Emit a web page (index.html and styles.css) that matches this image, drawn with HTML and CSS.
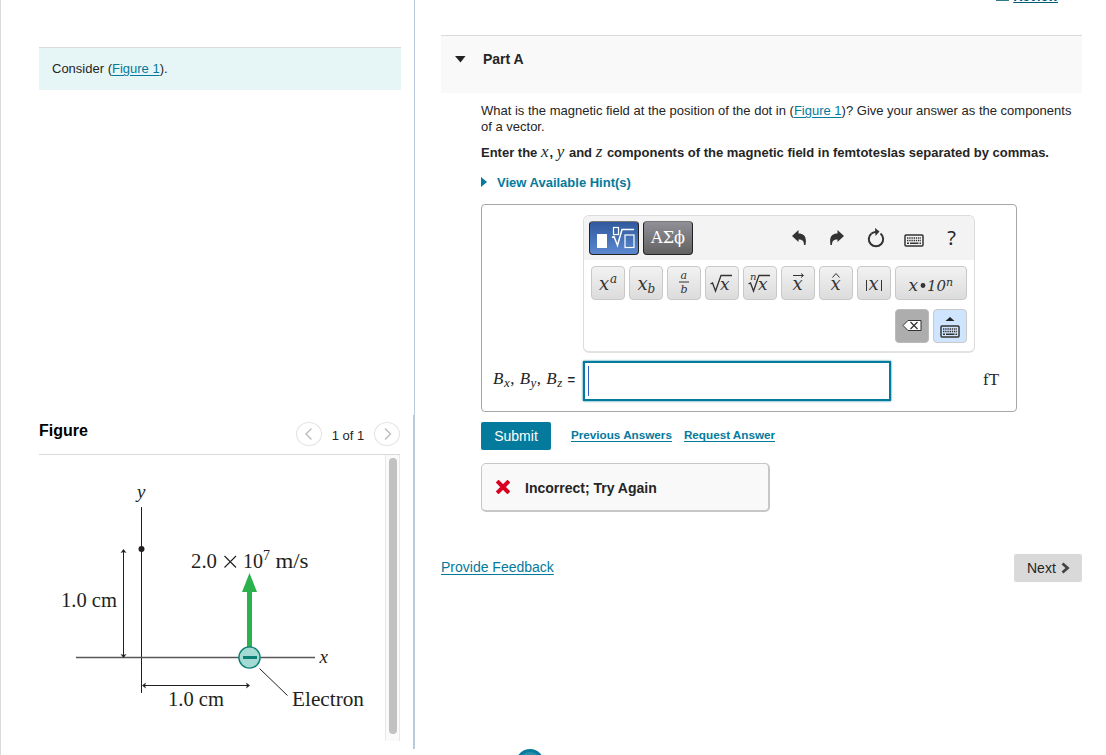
FILE: index.html
```html
<!doctype html>
<html lang="en">
<head>
  <meta charset="utf-8">
  <title>Magnetic Field</title>
  <link rel="stylesheet" href="styles.css">
</head>
<body>
  <svg class="defs" width="0" height="0">
    <symbol id="keyboard" viewBox="0 0 20 13">
      <rect x="1" y="1" width="18" height="11" rx="1" fill="none" stroke="#333" stroke-width="1.5"/>
      <path d="M3 4h14M3 6.5h14" stroke="#333" stroke-width="1.6" stroke-dasharray="1.4 .8"/>
      <path d="M3 9.2h2M6 9.2h8.500M15.500 9.200h1.500" stroke="#333" stroke-width="1.500"/>
    </symbol>
  </svg>
  <div class="page">
    <div class="left">
      <div class="intro-pane">
        <div class="intro">Consider (<a href="#">Figure 1</a>).</div>
      </div>
      <div class="figure-pane">
        <div class="figure-head">
          <h2>Figure</h2>
          <div class="pager">
            <button class="round"><svg width="24" height="22"><path d="M14.500 5.500L9 11l5.500 5.500" fill="none" stroke="#bbb" stroke-width="1.400"/></svg></button>
            <span>1 of 1</span>
            <button class="round"><svg width="24" height="22"><path d="M10 5.500l5.500 5.500-5.500 5.500" fill="none" stroke="#bbb" stroke-width="1.400"/></svg></button>
          </div>
        </div>
        <div class="figure-body">
          <svg class="diagram" width="346" height="286" viewBox="39 455 346 286">
            <g stroke="#231f20" stroke-width="1" fill="none">
              <path d="M141.500 507v186M123.500 551v104M144 685.500h104"/>
              <path d="M76 657.500h239" stroke="#58585a" stroke-width="1.300"/>
              <path d="M259.500 668.500l28 27"/>
            </g>
            <g fill="#231f20">
              <path d="M123.500 549l3 4-3-1-3 1zM123.500 658l3-4-3 1-3-1zM142 685.500l4-3-1 3 1 3zM250 685.500l-4-3 1 3-1 3z"/>
              <circle cx="141.500" cy="549" r="3"/>
            </g>
            <path d="M247 648v-56h-5l7.500-19 7.500 19H252v56z" fill="#2bb24c"/>
            <circle cx="249.500" cy="657.500" r="10.600" fill="#a3dad3" stroke="#0b8075" stroke-width="1.400"/>
            <path d="M243 657.500h14" stroke="#0b8075" stroke-width="3"/>
            <path d="M224.500 556l11.500 11.500M236 556l-11.500 11.500" stroke="#231f20" stroke-width="1.100"/>
            <g class="label">
              <text x="137" y="498" class="it">y</text>
              <text x="319.500" y="663" class="it">x</text>
              <text x="191" y="568" textLength="26" lengthAdjust="spacingAndGlyphs">2.0</text>
              <text x="243" y="568" textLength="20" lengthAdjust="spacingAndGlyphs">10</text>
              <text x="263" y="560" font-size="13">7</text>
              <text x="275.500" y="568" textLength="33" lengthAdjust="spacingAndGlyphs">m/s</text>
              <text x="61" y="607" textLength="56" lengthAdjust="spacingAndGlyphs">1.0 cm</text>
              <text x="168" y="706" textLength="56" lengthAdjust="spacingAndGlyphs">1.0 cm</text>
              <text x="292" y="706" textLength="72" lengthAdjust="spacingAndGlyphs">Electron</text>
            </g>
          </svg>
          <div class="scroll"><div class="thumb"></div></div>
        </div>
      </div>
    </div>

    <div class="right">
      <div class="review"><i></i><a href="#">Review</a></div>
      <div class="part-head"><svg width="11" height="7"><path d="M0 0h10.500L5.500 6.500z" fill="#222"/></svg><h3>Part A</h3></div>
      <div class="part">
        <p class="question">What is the magnetic field at the position of the dot in (<a href="#">Figure 1</a>)? Give your answer as the components<br>of a vector.</p>
        <p class="enter">Enter the <i class="m">x</i>, <i class="m">y</i> and <i class="m">z</i> components of the magnetic field in femtoteslas separated by commas.</p>
        <a class="hints" href="#"><svg width="6" height="10"><path d="M0 0l6 5-6 5z" fill="#047a9c"/></svg><span>View Available Hint(s)</span></a>

        <div class="answer">
          <div class="toolbar">
            <div class="tools">
              <button class="tab active"><svg width="48" height="32">
                <rect x="7" y="12" width="10" height="14" fill="#fff"/>
                <g fill="none" stroke="#fff" stroke-width="1.200"><rect x="23.500" y="5.500" width="5" height="7"/><path d="M22 15.500l2-1 3.500 9L32 7.500h12" stroke-width="1.500"/><rect x="35" y="13" width="9" height="12.500"/></g>
              </svg></button>
              <button class="tab"><svg width="48" height="32"><text x="7" y="21" textLength="34" lengthAdjust="spacingAndGlyphs" class="greek">ΑΣϕ</text></svg></button>
              <div class="actions">
                <svg width="14" height="16"><path d="M0 6L6.500 0v3.500c5.500 0 8.500 3 7 11.500H12c0-4-1.500-5.500-5.500-5.500V12z" fill="#333"/></svg>
                <svg width="14" height="16"><path d="M14 6L7.500 0v3.500c-5.500 0-8.500 3-7 11.500H2c0-4 1.500-5.500 5.500-5.500V12z" fill="#333"/></svg>
                <svg width="18" height="20"><path d="M4.500 5.500a7.200 7.200 0 1 0 9 0" fill="none" stroke="#333" stroke-width="2"/><path d="M4.500 5.500Q6.500 4 9 4" fill="none" stroke="#333" stroke-width="2"/><path d="M8 0l4.500 3.500L8.500 8z" fill="#333"/></svg>
                <svg class="kbd" width="20" height="13"><use href="#keyboard"/></svg>
                <span>?</span>
              </div>
            </div>
            <div class="keys">
              <button class="key"><svg><text x="7" y="23" font-size="18">x</text><text x="18" y="16" font-size="12">a</text></svg></button>
              <button class="key"><svg><text x="7.500" y="23" font-size="18">x</text><text x="17.500" y="26" font-size="12">b</text></svg></button>
              <button class="key"><svg><text x="12.500" y="12" font-size="11">a</text><path d="M11 15h10" stroke-width="1"/><text x="12.500" y="26" font-size="11">b</text></svg></button>
              <button class="key"><svg><path d="M4.500 17l2-1 3 8L15 8.500h11"/><text x="14" y="23" font-size="17">x</text></svg></button>
              <button class="key"><svg><path d="M4.500 17l2-1 3 8L15 8.500h11"/><text x="6" y="13" font-size="10">n</text><text x="14" y="23" font-size="17">x</text></svg></button>
              <button class="key"><svg><path d="M11 8.500h10M19 6.500l2.500 2-2.500 2" stroke-width="1"/><text x="10.500" y="23" font-size="18">x</text></svg></button>
              <button class="key"><svg><path d="M12.500 10.500l3.500-4 3.500 4" stroke-width="1"/><text x="10.500" y="23" font-size="18">x</text></svg></button>
              <button class="key"><svg><path d="M8.500 13v11M23.500 13v11" stroke-width="1"/><text x="10.500" y="23" font-size="18">x</text></svg></button>
              <button class="key wide"><svg><text x="12.500" y="24" font-size="17">x</text><circle cx="27" cy="18.500" r="1.800" fill="#333"/><text x="31" y="24" font-size="15" textLength="19" lengthAdjust="spacingAndGlyphs">10</text><text x="50" y="19" font-size="11">n</text></svg></button>
            </div>
            <div class="keys end">
              <button class="key dark"><svg><path d="M7 15.500L12 10.500h13v10H12z" fill="#fff" stroke="#333" stroke-width="1"/><path d="M14.500 12l7 7M21.500 12l-7 7" stroke-width="1.300"/></svg></button>
              <button class="key blue"><svg width="20" height="22" viewBox="0 0 20 22"><path d="M5.500 5h9L10 1z" fill="#222" stroke="none"/><use href="#keyboard" y="9" width="20" height="13"/></svg></button>
            </div>
          </div>
          <div class="entry">
            <div class="vars"><i>B<sub>x</sub></i>, <i>B<sub>y</sub></i>, <i>B<sub>z</sub></i> <b>=</b></div>
            <div class="field"><div class="caret"></div></div>
            <div class="unit">fT</div>
          </div>
        </div>

        <div class="buttons">
          <button class="submit">Submit</button>
          <a class="prev" href="#">Previous Answers</a>
          <a class="req" href="#">Request Answer</a>
        </div>
        <div class="result">
          <svg width="14" height="14"><path d="M2.500 2.500l9 9M11.500 2.500l-9 9" stroke="#db0020" stroke-width="4" stroke-linecap="square"/></svg>
          <span>Incorrect; Try Again</span>
        </div>
      </div>
      <div class="nav">
        <a href="#">Provide Feedback</a>
        <button class="next"><span>Next</span><svg width="9" height="12"><path d="M1.500 1.500L6.500 6l-5 4.500" fill="none" stroke="#444" stroke-width="2.800"/></svg></button>
      </div>
      <div class="logo"></div>
    </div>
  </div>
</body>
</html>
```
FILE: styles.css
```css
* {
  box-sizing: border-box;
}
body {
  margin: 0;
  background: #fff;
  color: #252525;
  font: 13px/16px "Liberation Sans", Arial, sans-serif;
}
a {
  color: #047a9c;
  text-underline-offset: 2px;
}
button {
  padding: 0;
  border: 0;
  font-family: inherit;
}
svg {
  display: block;
}
h2, h3, p {
  margin: 0;
}
.defs {
  position: absolute;
}
.page {
  display: flex;
  height: 755px;
  overflow: hidden;
}

/* left column */
.left {
  width: 415px;
  border-left: 1px solid #d9d9d9;
}
.intro-pane {
  height: 415px;
  padding: 47px 13px 0 38px;
  border-right: 1px solid #b9cbda;
}
.intro {
  height: 43px;
  padding: 13px;
  border-top: 1px solid #dadada;
  background: #e6f6f7;
}
.figure-pane {
  height: 334px;
  padding: 0 13px 0 38px;
  border-right: 2px solid #b9cbda;
}
.figure-head {
  display: flex;
  justify-content: space-between;
  height: 40px;
  border-bottom: 1px solid #dadada;
}
.figure-head h2 {
  padding-top: 6px;
  color: #000;
  font-size: 16px;
  line-height: 20px;
}
.pager {
  display: flex;
  padding-top: 7px;
}
.pager span {
  width: 52px;
  padding-top: 6px;
  text-align: center;
}
.round {
  width: 26px;
  height: 24px;
  border: 1px solid #e3e3e3;
  border-radius: 50%;
  background: #fff;
}
.figure-body {
  display: flex;
}
.label {
  fill: #231f20;
  font-family: "Liberation Serif", serif;
  font-size: 20px;
}
.it {
  font-size: 19px;
  font-style: italic;
}
.label [font-size] {
  font-size: 14px;
}
.scroll {
  width: 15px;
  height: 286px;
  padding: 3px;
  border: solid #e8e8e8;
  border-width: 0 1px;
  background: #fafafa;
}
.thumb {
  width: 8px;
  height: 276px;
  border-radius: 4px;
  background: #c1c1c1;
}

/* right column */
.right {
  width: 667px;
  padding-left: 26px;
}
.review {
  display: flex;
  height: 35px;
  overflow: hidden;
  justify-content: flex-end;
  padding-right: 24px;
  font-weight: bold;
  line-height: 16px;
}
.review i {
  width: 13px;
  height: 1px;
  margin-right: 4px;
  background: #35798d;
}
.review a {
  margin-top: -11px;
  color: #005a70;
  text-underline-offset: 1px;
}
.part-head {
  display: flex;
  height: 58px;
  padding: 15px 14px;
  border-top: 1px solid #dadada;
  background: #f9f9f9;
}
.part-head svg {
  margin-top: 5px;
}
.part-head h3 {
  margin-left: 17px;
  font-size: 14px;
}
.part {
  padding-left: 40px;
}
.question {
  height: 42px;
  padding-top: 10px;
  white-space: nowrap;
}
.enter {
  height: 16px;
  margin-top: 9px;
  font-weight: bold;
  white-space: nowrap;
}
.m {
  padding-right: 1px;
  font: italic 17px/16px "Liberation Serif", serif;
}
.hints {
  display: flex;
  margin-top: 15px;
  font-weight: bold;
  text-decoration: none;
}
.hints svg {
  margin: 2px 10px 0 0;
}
.answer {
  width: 536px;
  height: 208px;
  margin-top: 13px;
  padding-top: 10px;
  border: 1px solid #a6a6a6;
  border-radius: 4px;
}
.toolbar {
  width: 392px;
  height: 138px;
  margin-left: 101px;
  border: 1px solid #dcdcdc;
  border-bottom: 2px solid #e2e2e2;
  border-radius: 6px;
  overflow: hidden;
}
.tools {
  display: flex;
  gap: 4px;
  height: 44px;
  padding: 5px;
  background: #f3f3f3;
}
.tab {
  width: 50px;
  height: 34px;
  border: 1px solid #222;
  border-top-color: #777;
  border-radius: 4px;
  background: linear-gradient(#918f97, #626262);
}
.tab.active {
  background: linear-gradient(#315a9e, #5b88d0);
}
.greek {
  fill: #fff;
  font: 17px "DejaVu Serif", serif;
}
.actions {
  display: flex;
  flex: 1;
  align-items: center;
  justify-content: flex-end;
  padding-right: 13px;
}
.actions svg {
  margin-right: 24px;
}
.actions svg:nth-child(2) {
  margin-right: 23px;
}
.actions svg:nth-child(3) {
  margin: -1px 19px 0 0;
}
.actions svg.kbd {
  margin: 4px 23px 0 0;
}
.actions span {
  font: 20px/24px "Noto Sans", sans-serif;
}
.keys {
  display: flex;
  gap: 4px;
  padding: 6px 7px 0;
}
.keys.end {
  justify-content: flex-end;
  padding-top: 9px;
}
.key {
  width: 34px;
  height: 34px;
  border: 1px solid #c9c9c9;
  border-radius: 4px;
  background: linear-gradient(#f2f2f2, #dcdcdc);
}
.key svg {
  width: 32px;
  height: 32px;
  fill: none;
  stroke: #333;
  stroke-width: 1.3;
}
.key text {
  fill: #333;
  stroke: none;
  font-family: "DejaVu Serif", serif;
  font-style: italic;
}
.wide, .wide svg {
  width: 72px;
}
.dark {
  border-color: #bbb;
  background: #adadad;
}
.blue {
  background: #cfe5ff;
}
.blue svg {
  width: 20px;
  height: 22px;
  margin: 1px auto 0;
}
.entry {
  display: flex;
  padding: 8px 0 0 11px;
}
.vars {
  width: 90px;
  padding-top: 8px;
  font: 17px/20px "Liberation Serif", serif;
  letter-spacing: .5px;
  white-space: nowrap;
}
.vars sub {
  font-size: 13px;
  line-height: 0;
  vertical-align: -3px;
}
.vars b {
  font: bold 13px "Liberation Sans", sans-serif;
}
.field {
  width: 308px;
  height: 40px;
  padding: 3px;
  border: 2px solid #047a9c;
  box-shadow: 0 0 2px #047a9c;
}
.caret {
  width: 1px;
  height: 30px;
  background: #2f5fc4;
}
.unit {
  margin-left: 92px;
  padding-top: 9px;
  font: 17px/20px "Liberation Serif", serif;
}
.buttons {
  display: flex;
  height: 28px;
  margin-top: 10px;
  font-size: 11.7px;
  font-weight: bold;
  line-height: 26px;
}
.submit {
  width: 70px;
  height: 28px;
  margin-right: 20px;
  border-radius: 2px;
  background: #047a9c;
  color: #fff;
  font-size: 14px;
}
.prev {
  margin-right: 12px;
}
.result {
  display: flex;
  align-items: center;
  width: 289px;
  height: 49px;
  margin-top: 13px;
  padding-left: 14px;
  border: 1px solid #c7c7c7;
  border-width: 1px 2px 2px 1px;
  border-radius: 5px;
  background: #f9f9f9;
  font-size: 14px;
  font-weight: bold;
}
.result span {
  margin-left: 15px;
  padding-top: 2px;
}
.nav {
  display: flex;
  justify-content: space-between;
  margin-top: 42px;
  font-size: 14px;
  line-height: 27px;
}
.next {
  display: flex;
  align-items: center;
  width: 68px;
  height: 28px;
  padding-left: 13px;
  border-radius: 2px;
  background: #d9d9d9;
  color: #252525;
  font-size: 14px;
}
.next svg {
  margin-left: 5px;
}
.logo {
  width: 28px;
  height: 28px;
  margin: 167px 0 0 75px;
  border: 3px solid #047a9c;
  border-radius: 50%;
  background: #2b8fac;
}
```
